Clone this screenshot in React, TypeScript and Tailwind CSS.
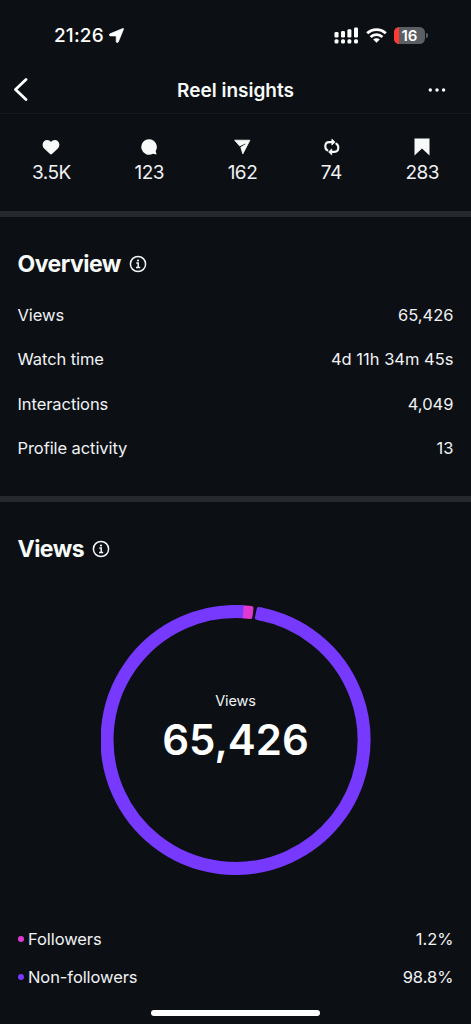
import type { ReactNode } from 'react';

type Row = { label: string; value: string; dot?: string };

const overview: Row[] = [
    { label: 'Views', value: '65,426' },
    { label: 'Watch time', value: '4d 11h 34m 45s' },
    { label: 'Interactions', value: '4,049' },
    { label: 'Profile activity', value: '13' },
];

const audience: Row[] = [
    { label: 'Followers', value: '1.2%', dot: 'bg-[#e038d0]' },
    { label: 'Non-followers', value: '98.8%', dot: 'bg-[#7839ff]' },
];

function SignalIcon() {
    return (
        <svg width="25" height="17" viewBox="0 0 25 17" fill="#fff">
            <rect x="0.5" y="5" width="4" height="5.5" rx="1.3" />
            <rect x="7" y="4" width="4" height="6.5" rx="1.3" />
            <rect x="13.4" y="2.3" width="4" height="8.2" rx="1.3" />
            <rect x="20" y="0.4" width="4" height="10.1" rx="1.3" />
            <rect x="0.5" y="12.2" width="4" height="4.3" rx="1.5" />
            <rect x="7" y="12.2" width="4" height="4.3" rx="1.5" />
            <rect x="13.4" y="12.2" width="4" height="4.3" rx="1.5" />
            <rect x="20" y="12.2" width="4" height="4.3" rx="1.5" />
        </svg>
    );
}

function WifiIcon() {
    return (
        <svg width="21" height="15" viewBox="0 0 21 15" fill="none" stroke="#fff" strokeWidth="2.8">
            <path d="M1.2 5.3C6.4.3 14.6.3 19.8 5.3" />
            <path d="M4.6 8.9C7.9 5.8 13.1 5.8 16.4 8.9" />
            <path d="M10.5 14.8 7.2 11.5C9 9.7 12 9.7 13.8 11.5Z" fill="#fff" stroke="none" />
        </svg>
    );
}

function Battery() {
    return (
        <div className="flex items-center gap-px">
            <div className="flex h-[17px] w-[31px] overflow-hidden rounded-[5.5px] bg-[#5b5e62]">
                <div className="w-[5px] bg-[#ff3b30]" />
                <span className="w-[21px] text-center text-[15px] leading-[17px] font-semibold">16</span>
            </div>
            <div className="h-[5px] w-[2px] rounded-r-full bg-[#5b5e62]" />
        </div>
    );
}

function InfoIcon() {
    return (
        <svg width="18" height="18" viewBox="0 0 18 18" fill="none" stroke="#f3f5f6" strokeWidth="1.5">
            <circle cx="9" cy="9" r="7.6" />
            <path d="M7.3 8.1H9.2V12.4M7 12.5H11.2" />
            <circle cx="9" cy="5.5" r="1.1" fill="#f3f5f6" stroke="none" />
        </svg>
    );
}

function Stat({ value, children }: { value: string; children: ReactNode }) {
    return (
        <div className="flex flex-col items-center">
            <svg width="20" height="20" viewBox="0 0 20 20" fill="#f8fafa">
                {children}
            </svg>
            <span className="mt-1 text-[19px] leading-6 tracking-[-0.5px]">{value}</span>
        </div>
    );
}

function SectionTitle({ children }: { children: ReactNode }) {
    return (
        <div className="flex items-center gap-2">
            <h2 className="text-[23px] leading-7 font-bold tracking-[-0.52px] text-[#f8fafa]">{children}</h2>
            <InfoIcon />
        </div>
    );
}

function DataRow({ row }: { row: Row }) {
    return (
        <div className="flex items-center justify-between text-[16.5px] leading-6">
            <span className="flex items-center gap-[4.5px] tracking-[-0.08px]">
                {row.dot && <i className={`h-1.5 w-1.5 rounded-full ${row.dot}`} />}
                {row.label}
            </span>
            <span>{row.value}</span>
        </div>
    );
}

function ViewsRing() {
    return (
        <div className="grid h-[270px] w-[270px] place-items-center">
            <svg className="col-start-1 row-start-1" width="270" height="270" viewBox="0 0 270 270" fill="none">
                <path d="M141 .2L150.8.9Q152.8 1.2 152.5 3.2L151.4 12.3Q151.1 14.2 149 13.9L141 13.2Z" fill="#e038d0" />
                {/* rounded leading edge of the long arc */}
                <path d="M162 2.8L157.8 2.1Q156.1 1.9 155.8 3.6L153.9 12.6Q153.6 14.4 155.4 14.8L160 15.7Z" fill="#7839ff" />
                <path d="M158.9 8.8A128.5 128.5 0 1 1 142.2 6.7" stroke="#7839ff" strokeWidth="13" />
            </svg>
            <div className="col-start-1 row-start-1 flex flex-col items-center pb-[27px]">
                <span className="text-[14.5px] leading-5 tracking-[-0.1px]">Views</span>
                <span className="mt-[7px] text-[42px] leading-[44px] font-semibold text-white">65,426</span>
            </div>
        </div>
    );
}

export default function App() {
    return (
        <div className="flex h-[1024px] w-[471px] flex-col overflow-hidden bg-[#0c1014] font-['Inter',sans-serif] text-[#f0f2f4]">
            <div className="flex h-[66px] items-center justify-between pt-1 pr-[43px] pl-[54px] text-white">
                <div className="flex items-center gap-[5px]">
                    <span className="pt-0.5 text-[19px] leading-6 font-medium tracking-[0.15px]">21:26</span>
                    <svg width="15" height="15" viewBox="0 0 15 15" fill="#fff" stroke="#fff" strokeWidth="0.7" strokeLinejoin="round">
                        <path d="M13.8.5C14.4.2 14.8.6 14.5 1.2L9.3 13.9C8.9 14.9 7.2 14.7 7.2 13.6V8.6C7.2 8.1 7 7.9 6.5 7.9H1.3C.2 7.9 0 6.2 1 5.8Z" />
                    </svg>
                </div>
                <div className="flex items-center gap-[7px]">
                    <SignalIcon />
                    <WifiIcon />
                    <Battery />
                </div>
            </div>

            <header className="grid h-12 grid-cols-[60px_1fr_60px] items-center border-b border-[#171b1f] text-[#f8fafa]">
                <svg className="ml-[13px]" width="16" height="24" viewBox="0 0 16 24" fill="none" stroke="#fff" strokeWidth="2.8" strokeLinecap="round" strokeLinejoin="round">
                    <path d="M13 1.5 2.5 11.5 13 21.5" />
                </svg>
                <h1 className="pt-0.5 text-center text-[19px] leading-6 font-semibold">Reel insights</h1>
                <svg className="ml-[17px]" width="18" height="4" viewBox="0 0 18 4" fill="#fff">
                    <circle cx="2.3" cy="2" r="1.7" />
                    <circle cx="9" cy="2" r="1.7" />
                    <circle cx="15.6" cy="2" r="1.7" />
                </svg>
            </header>

            <div className="flex h-[97px] justify-between px-8 pt-[23px]">
                <Stat value="3.5K">
                    <path d="M10 17.4Q9.5 17.4 8.8 16.7L3.4 11.7C0 8.2 1.9 3 6 2.9 7.8 2.9 9.2 3.7 10 5 10.8 3.7 12.2 2.9 14 2.9 18.1 3 20 8.2 16.6 11.7L11.2 16.7Q10.5 17.4 10 17.4Z" />
                </Stat>
                <Stat value="123">
                    <path d="M10 2.2A7.8 7.8 0 1 0 13.9 16.8L17.5 17.6 16.7 14A7.8 7.8 0 0 0 10 2.2Z" />
                </Stat>
                <Stat value="162">
                    <path d="M2.6 3.2H17.9L10.8 16.9 8.8 10.3 13.8 7.3 13.2 6.2 7.6 8.9Z" strokeWidth="0.8" stroke="#f8fafa" strokeLinejoin="round" />
                </Stat>
                <Stat value="74">
                    <path d="M6.3 13.3C4.3 12.3 4.3 11 4.3 9.2C4.3 6.2 5.4 5.1 8.2 5.1H11.2M15.3 6.7C17.3 7.7 17.3 9 17.3 10.8C17.3 13.8 16.2 14.9 13.4 14.9H10.4" fill="none" stroke="#f8fafa" strokeWidth="2.1" strokeLinecap="round" />
                    <path d="M10.9 2.1 14 5.1 10.9 8.1ZM10.7 11.9 7.6 14.9 10.7 17.9Z" stroke="#f8fafa" strokeWidth="0.8" strokeLinejoin="round" />
                </Stat>
                <Stat value="283">
                    <path d="M2.5 1.4H17.5V18.6L10 11.5 2.5 18.6Z" />
                </Stat>
            </div>
            <div className="h-1.5 bg-[#25282d]" />

            <section className="h-[279px] px-[17.5px] pt-[33px]">
                <SectionTitle>Overview</SectionTitle>
                <div className="mt-[25px] flex flex-col gap-[20.3px]">
                    {overview.map((row) => <DataRow key={row.label} row={row} />)}
                </div>
            </section>
            <div className="h-1.5 bg-[#25282d]" />

            <section className="flex-1 px-[17.5px] pt-[32.5px]">
                <SectionTitle>Views</SectionTitle>
                <div className="mt-[42.5px] flex justify-center">
                    <ViewsRing />
                </div>
                <div className="mt-[52px] flex flex-col gap-3.5">
                    {audience.map((row) => <DataRow key={row.label} row={row} />)}
                </div>
            </section>
            <div className="mx-auto mb-2 h-[6px] w-[169px] rounded-full bg-white" />
        </div>
    );
}
